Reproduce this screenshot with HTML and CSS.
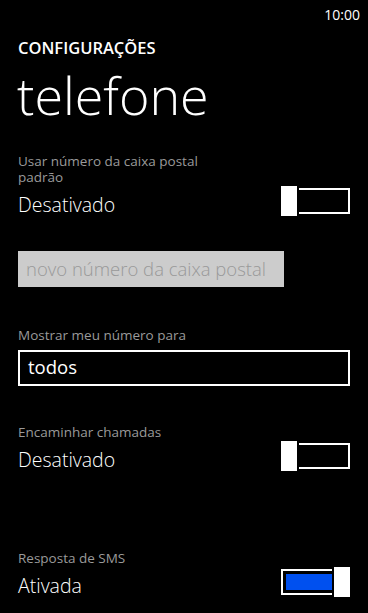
FILE: index.html
```html
<!DOCTYPE html>
<html>
<head>
    <meta charset="UTF-8">
    <title>telefone</title>
    <link rel="stylesheet" href="styles.css">
</head>
<body>
<div class="status_bar">10:00</div>

<div class="page_title">
    <div class="app_name">CONFIGURAÇÕES</div>
    <h1>telefone</h1>
</div>

<div class="settings">
    <div class="setting first">
        <div class="label">Usar número da caixa postal<br>padrão</div>
        <div class="toggle_row">
            <span class="value">Desativado</span>
            <span class="toggle off">
                <span class="thumb"></span>
                <span class="track"></span>
            </span>
        </div>
    </div>

    <div class="text_box disabled">novo número da caixa postal</div>

    <div class="setting">
        <div class="label">Mostrar meu número para</div>
        <div class="picker">todos</div>
    </div>

    <div class="setting forward">
        <div class="label">Encaminhar chamadas</div>
        <div class="toggle_row">
            <span class="value">Desativado</span>
            <span class="toggle off">
                <span class="thumb"></span>
                <span class="track"></span>
            </span>
        </div>
    </div>

    <div class="setting sms">
        <div class="label">Resposta de SMS</div>
        <div class="toggle_row">
            <span class="value">Ativada</span>
            <span class="toggle on">
                <span class="track"><span class="fill"></span></span>
                <span class="thumb"></span>
            </span>
        </div>
    </div>
</div>
</body>
</html>
```

FILE: styles.css
```css
html, body {
    margin: 0;
    padding: 0;
    background: #000;
}

body {
    width: 368px;
    height: 613px;
    overflow: hidden;
    font-family: "Open Sans", "Noto Sans", Arial, sans-serif;
    color: #fff;
}

.status_bar {
    padding: 7px 8px 0 0;
    height: 16px;
    line-height: 16px;
    font-size: 14px;
    text-align: right;
}

.page_title {
    padding-left: 18px;
    margin-top: 15px;
}

.app_name {
    font-size: 16.5px;
    line-height: 20px;
    font-weight: 600;
}

.page_title h1 {
    margin: 9px 0 0 -1px;
    font-size: 52px;
    line-height: 56px;
    font-weight: 300;
}

.settings {
    padding: 0 18px;
}

.setting {
    margin-top: 40px;
}

.setting.first {
    margin-top: 30px;
}

.setting.forward {
    margin-top: 38px;
}

.setting.sms {
    margin-top: 75px;
}

.label {
    font-size: 13.5px;
    line-height: 16px;
    color: #9a9a9a;
}

.toggle_row {
    display: flex;
    justify-content: space-between;
    align-items: flex-start;
    margin-top: 1px;
}

.value {
    padding-top: 4px;
    font-size: 19.5px;
    line-height: 30px;
    font-weight: 300;
}

.toggle {
    display: flex;
    align-items: center;
    width: 69px;
    height: 30px;
}

.toggle .thumb {
    width: 16px;
    height: 30px;
    background: #fff;
}

.toggle .track {
    box-sizing: border-box;
    height: 26px;
    border: 2px solid #fff;
}

.toggle.off .track {
    width: 51px;
    margin-left: 2px;
    border-left: none;
}

.toggle.on .track {
    display: flex;
    width: 51px;
    margin-right: 2px;
    padding: 3px 0 3px 3px;
    border-right: none;
}

.toggle .fill {
    flex: 1;
    background: #0050ef;
}

.text_box {
    box-sizing: border-box;
    margin-top: 31px;
    width: 266px;
    height: 36px;
    padding-left: 8px;
    line-height: 36px;
    font-size: 18.5px;
    font-weight: 300;
    white-space: nowrap;
}

.text_box.disabled {
    background: #cccccc;
    color: #999;
}

.picker {
    margin-top: 7px;
    height: 30px;
    padding: 0 8px 2px;
    border: 2px solid #fff;
    font-size: 18.5px;
    line-height: 30px;
}
```
